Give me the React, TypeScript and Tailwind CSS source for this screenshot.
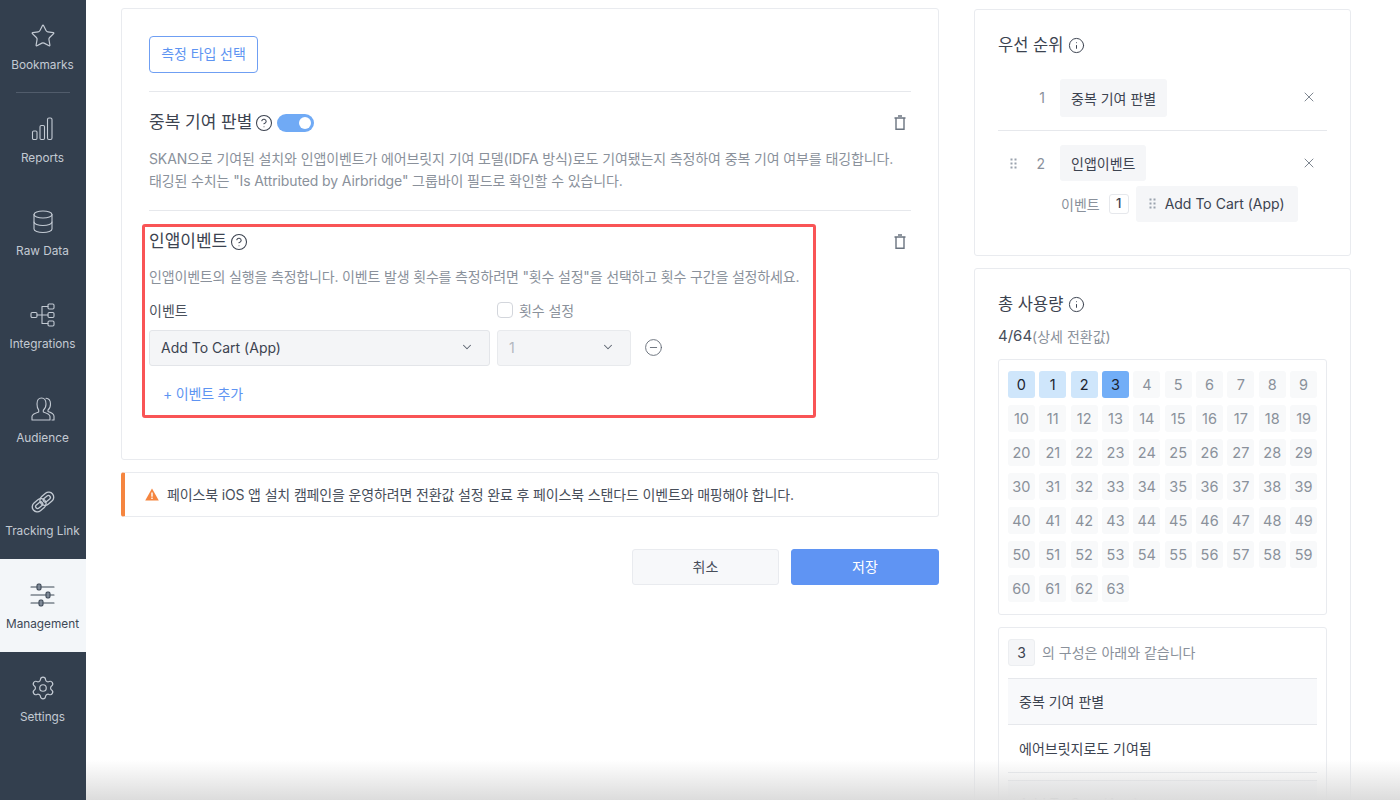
import { ChevronDown, CircleHelp, CircleMinus, Info, Settings, Star, X } from "lucide-react";
import { Fragment } from "react";
import type { ReactNode } from "react";

const StrokeIcon = ({ children, size = 26 }: { children: ReactNode; size?: number }) => (
  <svg width={size} height={size} viewBox="0 0 26 26" fill="none" stroke="currentColor" strokeWidth="1.1" strokeLinecap="round" strokeLinejoin="round">
    {children}
  </svg>
);

const ReportsIcon = () => (
  <StrokeIcon>
    <rect x="2.5" y="15" width="4.5" height="8.5" rx="1.2" />
    <rect x="10" y="9.5" width="4.5" height="14" rx="1.2" />
    <rect x="17.5" y="2" width="4.5" height="21.5" rx="1.5" />
  </StrokeIcon>
);

const DatabaseIcon = () => (
  <StrokeIcon>
    <ellipse cx="13" cy="5.5" rx="9" ry="3.5" />
    <path d="M4 5.5v14.5c0 2 4 3.5 9 3.5s9-1.5 9-3.5V5.5" />
    <path d="M4 13c0 2 4 3.5 9 3.5s9-1.5 9-3.5" />
  </StrokeIcon>
);

const IntegrationsIcon = () => (
  <StrokeIcon>
    <rect x="1" y="10.5" width="6" height="5" rx="1.2" />
    <rect x="18" y="2" width="6" height="5" rx="1.2" />
    <rect x="18" y="10.5" width="6" height="5" rx="1.2" />
    <rect x="18" y="19" width="6" height="5" rx="1.2" />
    <path d="M7 13h11M12 4.5v17M12 4.5h6M12 21.5h6" />
  </StrokeIcon>
);

const AudienceIcon = () => (
  <StrokeIcon>
    <path d="M7 8c0-3.500 1.600-6 4.500-6S16 4.500 16 8c0 2.800-1.200 5-2.700 6.200v1.800c3.200 1 6.700 2.500 6.700 4.500v3.500H2V20.500c0-2 3.500-3.500 6.700-4.500v-1.800C7.800 13 7 10.800 7 8z" />
    <path d="M16 2.300C18.800 2.500 20.500 5 20.500 8c0 2.800-1 4.800-2.500 6v1.500c3 1 6 2.500 6 4.700V24h-2" />
  </StrokeIcon>
);

const LinkIcon = () => (
  <StrokeIcon>
    <g transform="rotate(-40 13 13)" strokeWidth="1.3">
      <rect x="0.5" y="8" width="15" height="10" rx="5" />
      <rect x="10.5" y="8" width="15" height="10" rx="5" />
      <rect x="4" y="11" width="8" height="4" rx="2" />
      <rect x="14" y="11" width="8" height="4" rx="2" />
    </g>
  </StrokeIcon>
);

const SlidersIcon = () => (
  <StrokeIcon>
    <path d="M1 5h23M1 13h23M1 21h23" />
    <rect x="7" y="2" width="4" height="6" rx="1.5" fill="#7d8896" />
    <rect x="16" y="10" width="4" height="6" rx="1.5" fill="#7d8896" />
    <rect x="9" y="18" width="4" height="6" rx="1.5" fill="#7d8896" />
  </StrokeIcon>
);

const TrashIcon = () => (
  <svg width="14" height="16" viewBox="0 0 14 16" fill="none" stroke="#6b7480" strokeWidth="1.4">
    <path d="M1.5 3h11M5 1h4" />
    <path d="M3 3v11.300h8V3" />
  </svg>
);

const GripIcon = ({ color = "#9aa2ad" }: { color?: string }) => (
  <svg width="8" height="11" viewBox="0 0 8 11" fill={color}>
    <rect x="0.5" y="0.5" width="2" height="2" />
    <rect x="4.5" y="0.5" width="2" height="2" />
    <rect x="0.5" y="4.5" width="2" height="2" />
    <rect x="4.5" y="4.5" width="2" height="2" />
    <rect x="0.5" y="8.5" width="2" height="2" />
    <rect x="4.5" y="8.5" width="2" height="2" />
  </svg>
);

const WarnIcon = () => (
  <svg width="14" height="13" viewBox="0 0 14 13">
    <path d="M7 .5 13.800 12.500H.2z" fill="#f5853f" />
    <rect x="6.300" y="4.500" width="1.400" height="4.200" fill="#fff" />
    <rect x="6.300" y="9.600" width="1.400" height="1.400" fill="#fff" />
  </svg>
);

const navItems = [
  { label: "Bookmarks", icon: <Star size={26} strokeWidth={1.1} /> },
  { label: "Reports", icon: <ReportsIcon /> },
  { label: "Raw Data", icon: <DatabaseIcon /> },
  { label: "Integrations", icon: <IntegrationsIcon /> },
  { label: "Audience", icon: <AudienceIcon /> },
  { label: "Tracking Link", icon: <LinkIcon /> },
  { label: "Management", icon: <SlidersIcon />, active: true },
  { label: "Settings", icon: <Settings size={26} strokeWidth={1.1} /> },
];

const Sidebar = () => (
  <aside className="w-[86px] shrink-0 bg-[#333f4e] flex flex-col">
    {navItems.map((item, i) => (
      <Fragment key={item.label}>
        <div
          className={
            item.active
              ? "h-[93.2px] shrink-0 flex flex-col items-center pt-[23px] pr-[1px] gap-[7px] bg-[#f3f6f9] text-[#3d4856]"
              : i === 0
              ? "h-[92px] shrink-0 flex flex-col items-center pt-[23px] pr-[1px] gap-[7px] text-[#c3cad3]"
              : "h-[93.2px] shrink-0 flex flex-col items-center pt-[23px] pr-[1px] gap-[7px] text-[#c3cad3]"
          }
        >
          {item.icon}
          <span className="text-[11.8px] leading-[18px] whitespace-nowrap">{item.label}</span>
        </div>
        {i === 0 && <div className="h-px shrink-0 mx-[16px] bg-[#515c6b]" />}
      </Fragment>
    ))}
  </aside>
);

const Toggle = () => (
  <span className="w-[37px] h-[18px] rounded-full bg-[#70aaf5] flex items-center justify-end pr-[3px]">
    <span className="w-[12px] h-[12px] rounded-full bg-white" />
  </span>
);

const LeftColumn = () => (
  <div className="w-[818px] shrink-0 flex flex-col">
    <section className="h-[452px] shrink-0 border border-[#e9ebef] rounded-[3px] bg-white px-[27px] pt-[27px]">
      <button className="w-[109px] h-[37px] pb-[2px] border border-[#6f9ff3] rounded-[4px] text-[14px] tracking-[-0.1px] text-[#5e94f2]">측정 타입 선택</button>

      <div className="mt-[18px] border-t border-[#e6e8ec] pt-[19px] pb-[18px] border-b">
        <div className="flex items-center h-[24px]">
          <h2 className="text-[17px] text-[#3c4350]">중복 기여 판별</h2>
          <CircleHelp size={18} strokeWidth={1.4} className="ml-[3px] mr-[4px] text-[#3c4350]" />
          <Toggle />
          <span className="ml-auto mr-[4px]"><TrashIcon /></span>
        </div>
        <p className="mt-[13px] text-[14px] leading-[22px] tracking-[-0.12px] text-[#8a919b] whitespace-nowrap">
          SKAN으로 기여된 설치와 인앱이벤트가 에어브릿지 기여 모델(IDFA 방식)로도 기여됐는지 측정하여 중복 기여 여부를 태깅합니다.
          <br />
          태깅된 수치는 "Is Attributed by Airbridge" 그룹바이 필드로 확인할 수 있습니다.
        </p>
      </div>

      <div className="relative mt-[13px]">
        <div className="w-[674px] h-[194px] ml-[-7px] border-[3px] border-[#f95456] rounded-[3px] px-[4px] pt-[5px]">
          <div className="flex items-center h-[20px]">
            <h2 className="text-[17px] text-[#3c4350]">인앱이벤트</h2>
            <CircleHelp size={18} strokeWidth={1.4} className="ml-[3px] text-[#3c4350]" />
          </div>
          <p className="mt-[14px] text-[14px] leading-[22px] tracking-[-0.17px] text-[#8a919b] whitespace-nowrap">
            인앱이벤트의 실행을 측정합니다. 이벤트 발생 횟수를 측정하려면 "횟수 설정"을 선택하고 횟수 구간을 설정하세요.
          </p>
          <div className="mt-[12px] flex gap-[7px]">
            <div className="w-[341px]">
              <div className="h-[20px] flex items-center text-[14px] text-[#4a515c]">이벤트</div>
              <div className="mt-[10px] h-[36px] flex items-center justify-between pl-[11px] pr-[15px] pb-[2px] bg-[#f4f5f7] border border-[#e3e5e9] rounded-[3px] text-[14px] text-[#3c4350]">
                Add To Cart (App)
                <ChevronDown size={14} strokeWidth={1.8} className="text-[#5c6470]" />
              </div>
            </div>
            <div className="w-[134px]">
              <div className="h-[20px] flex items-center gap-[6px] text-[14px] tracking-[-0.1px] text-[#8a919b]">
                <span className="w-[16px] h-[16px] border border-[#d3d6dc] rounded-[4px] bg-white" />
                횟수 설정
              </div>
              <div className="mt-[10px] h-[36px] flex items-center justify-between pl-[11px] pr-[15px] pb-[2px] bg-[#f4f5f7] border border-[#e8eaed] rounded-[3px] text-[14px] text-[#b2b7bf]">
                1
                <ChevronDown size={14} strokeWidth={1.8} className="text-[#5c6470]" />
              </div>
            </div>
            <div className="h-[36px] mt-[29px] ml-[6px] flex items-center">
              <CircleMinus size={19} strokeWidth={1.1} className="text-[#5c6470]" />
            </div>
          </div>
          <div className="mt-[18px] ml-[14px] text-[14px] leading-[20px] tracking-[-0.2px] text-[#5e94f2]">+ 이벤트 추가</div>
        </div>
        <span className="absolute right-[4px] top-[10px]"><TrashIcon /></span>
      </div>
    </section>

    <div className="mt-[12px] h-[45px] shrink-0 flex items-center border border-[#e9ebef] border-l-[4px] border-l-[#f5853f] rounded-[3px] pl-[20px] gap-[8px] text-[14px] tracking-[-0.15px] text-[#474e5a]">
      <WarnIcon />
      페이스북 iOS 앱 설치 캠페인을 운영하려면 전환값 설정 완료 후 페이스북 스탠다드 이벤트와 매핑해야 합니다.
    </div>

    <div className="mt-[32px] flex justify-end gap-[12px]">
      <button className="w-[147px] h-[36px] pb-[2px] bg-[#f7f8fa] border border-[#e9ebef] rounded-[3px] text-[14px] text-[#474e5a]">취소</button>
      <button className="w-[148px] h-[36px] pb-[2px] bg-[#5f94f3] border border-[#5f94f3] rounded-[3px] text-[14px] text-white">저장</button>
    </div>
  </div>
);

const PriorityCard = () => (
  <section className="h-[247px] shrink-0 border border-[#e9ebef] rounded-[3px] bg-white px-[23px] pt-[23px]">
    <div className="flex items-center h-[24px]">
      <h2 className="text-[16.5px] text-[#3c4350]">우선 순위</h2>
      <Info size={17} strokeWidth={1.4} className="ml-[5px] text-[#3c4350]" />
    </div>
    <div className="mt-[22px] h-[52px] flex items-start border-b border-[#e6e8ec]">
      <span className="w-[62px] h-[37px] flex items-center justify-end pr-[15px] text-[14px] text-[#8a919b]">1</span>
      <span className="h-[38px] flex items-center px-[11px] bg-[#f5f6f8] rounded-[3px] text-[14px] text-[#3c4350]">중복 기여 판별</span>
      <X size={16} strokeWidth={1.3} className="ml-auto mr-[10px] mt-[10px] text-[#6b7480]" />
    </div>
    <div className="mt-[14px] flex items-start">
      <span className="w-[16px] ml-[12px] h-[36px] flex items-center"><GripIcon /></span>
      <span className="w-[34px] h-[36px] flex items-center justify-end pr-[15px] text-[14px] text-[#8a919b]">2</span>
      <span className="h-[36px] flex items-center px-[11px] bg-[#f5f6f8] rounded-[3px] text-[14px] text-[#3c4350]">인앱이벤트</span>
      <X size={16} strokeWidth={1.3} className="ml-auto mr-[10px] mt-[10px] text-[#6b7480]" />
    </div>
    <div className="mt-[5px] ml-[63px] flex items-center">
      <span className="text-[14px] text-[#8a919b]">이벤트</span>
      <span className="ml-[9px] w-[20px] h-[20px] flex items-center justify-center border border-[#e6e8ec] rounded-[3px] text-[13px] font-medium text-[#3c4350]">1</span>
      <span className="ml-[7px] h-[36px] flex items-center gap-[8px] pl-[13px] pr-[13px] pb-[1px] bg-[#f5f6f8] rounded-[3px] text-[14px] text-[#3c4350]">
        <GripIcon />
        Add To Cart (App)
      </span>
    </div>
  </section>
);

const valueCell = (n: number) => {
  if (n === 3) return "h-[27px] flex items-center justify-center rounded-[3px] text-[14.5px] bg-[#72aef7] text-[#1c2430]";
  if (n < 3) return "h-[27px] flex items-center justify-center rounded-[3px] text-[14.5px] bg-[#cfe6fb] text-[#1c2430]";
  return "h-[27px] flex items-center justify-center rounded-[3px] text-[14.5px] bg-[#f8f9fa] text-[#8a919b]";
};

const UsageCard = () => (
  <section className="mt-[12px] shrink-0 border border-[#e9ebef] rounded-[3px] bg-white px-[23px] pt-[23px]">
    <div className="flex items-center h-[24px]">
      <h2 className="text-[16.5px] text-[#3c4350]">총 사용량</h2>
      <Info size={17} strokeWidth={1.4} className="ml-[5px] text-[#3c4350]" />
    </div>
    <div className="mt-[9px] h-[22px] flex items-center text-[15px] text-[#474e5a]">
      4/64<span className="text-[#8a919b] text-[14px]">(상세 전환값)</span>
    </div>
    <div className="mt-[12px] h-[256px] border border-[#e9ebef] rounded-[3px] px-[9px] pt-[11px] grid grid-cols-10 gap-x-[4.5px] gap-y-[7px] content-start">
      {Array.from({ length: 64 }, (_, n) => (
        <div key={n} className={valueCell(n)}>{n}</div>
      ))}
    </div>
    <div className="mt-[12px] border border-[#e9ebef] rounded-[3px] px-[9px] pt-[11px] pb-[20px]">
      <div className="flex items-center gap-[7px]">
        <span className="w-[27px] h-[27px] flex items-center justify-center bg-[#f5f6f8] border border-[#eceef1] rounded-[3px] text-[14px] text-[#3c4350]">3</span>
        <span className="text-[14px] text-[#8a919b]">의 구성은 아래와 같습니다</span>
      </div>
      <div className="mt-[12px] h-[47px] flex items-center px-[11px] bg-[#f8f9fb] border-y border-[#e6e8ec] text-[14px] text-[#3c4350]">중복 기여 판별</div>
      <div className="h-[48px] flex items-center px-[11px] border-b border-[#e6e8ec] text-[14px] text-[#3c4350]">에어브릿지로도 기여됨</div>
      <div className="mt-[7px] h-[47px] flex items-center px-[11px] bg-[#f8f9fb] border-y border-[#e6e8ec] text-[14px] text-[#3c4350]">Add To Cart (App)</div>
    </div>
  </section>
);

export default function App() {
  return (
    <div className="relative h-[800px] overflow-hidden flex bg-white font-[family-name:Inter,'Noto_Sans_CJK_KR',sans-serif]">
      <Sidebar />
      <main className="flex gap-[35px] pl-[35px] pt-[8px]">
        <LeftColumn />
        <div className="w-[377px] shrink-0 flex flex-col pt-[1px]">
          <PriorityCard />
          <UsageCard />
        </div>
      </main>
      <div className="absolute left-[86px] right-0 bottom-0 h-[40px] bg-gradient-to-b from-transparent to-[#dcdcdc] pointer-events-none" />
    </div>
  );
}
